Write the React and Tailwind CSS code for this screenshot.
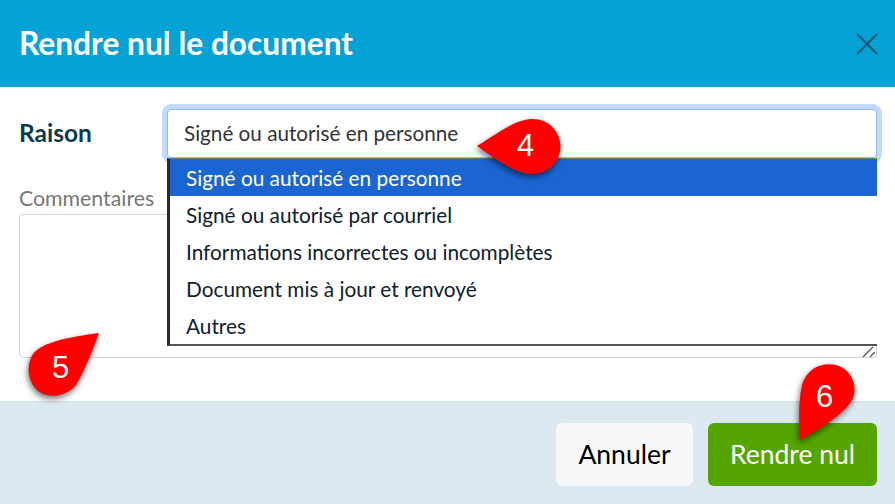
import React from "react";

const options = [
  "Signé ou autorisé en personne",
  "Signé ou autorisé par courriel",
  "Informations incorrectes ou incomplètes",
  "Document mis à jour et renvoyé",
  "Autres",
];

// numbered red callouts that sit over the dialog
function Callout({ d, label, textClass }) {
  return (
    <div className="absolute left-0 top-0 z-20">
      <svg width="895" height="504" viewBox="0 0 895 504" className="drop-shadow-[-1px_3px_3px_rgba(0,0,0,0.55)]">
        <path d={d} fill="#ff0000" />
      </svg>
      <span className={"absolute text-white text-[31px] leading-none font-['Liberation_Sans',sans-serif] " + textClass}>
        {label}
      </span>
    </div>
  );
}

export default function App() {
  return (
    <div className="relative w-[895px] h-[504px] overflow-hidden bg-white font-['Lato',sans-serif]">
      {/* Header */}
      <div className="h-[87px] bg-[#05a2d6] flex items-center justify-between pl-[19px] pr-[17px]">
        <h1 className="text-[31.7px] leading-none font-bold text-white">Rendre nul le document</h1>
        <svg width="22" height="22" viewBox="0 0 22 22" fill="none" stroke="#0c5a78" strokeWidth="2.2">
          <path d="M1 1L21 21M21 1L1 21" />
        </svg>
      </div>

      {/* Body */}
      <div className="h-[314px] pl-[19px] pr-[18px] pt-[22px]">
        <div className="flex items-center h-[49px]">
          <label className="w-[148px] text-[24.5px] font-bold text-[#0b3a4a]">Raison</label>
          <div className="relative flex-1">
            <div className="h-[49px] bg-white rounded-[4px] border border-[#8fb8f5] ring-[5px] ring-[#c3dafe] flex items-center pl-[16px] text-[20.7px] text-[#333333]">
              {options[0]}
            </div>
            <ul className="absolute z-10 top-[49px] left-0 w-full h-[188px] bg-white border-l-[3px] border-l-[#2b2b2b] border-t border-t-[#767676] border-b-2 border-b-[#555555] text-[20.8px] text-[#10202c]">
              {options.map((o, i) => (
                <li
                  key={o}
                  className={
                    "h-[37px] flex items-center pl-[16px] " + (i === 0 ? "bg-[#1a65d2] text-white" : "")
                  }
                >
                  {o}
                </li>
              ))}
            </ul>
          </div>
        </div>

        <div className="mt-[24px]">
          <div className="text-[21.3px] leading-[32px] text-[#777777]">Commentaires</div>
          <div className="relative">
            <textarea
              readOnly
              className="block w-full h-[144px] bg-white border border-[#cfd5dc] rounded-[4px] resize-none"
            />
            <svg width="14" height="11" viewBox="0 0 14 11" className="absolute right-[1px] bottom-[1px]" fill="none" stroke="#555555" strokeWidth="1.3">
              <path d="M1 11L11 1M8 11L13 6" />
            </svg>
          </div>
        </div>
      </div>

      {/* Footer */}
      <div className="h-[103px] bg-[#dde9f0] border-t border-t-[#d3dfe6] flex justify-end items-start gap-[15px] pr-[18px] pt-[21px]">
        <button className="w-[137px] h-[63px] rounded-[6px] bg-[#f6f8fa] text-[26.5px] text-black">Annuler</button>
        <button className="w-[169px] h-[63px] rounded-[6px] bg-[#55a500] text-[26.5px] text-white">Rendre nul</button>
      </div>

      <Callout
        label="4"
        textClass="left-[517px] top-[130px]"
        d="M477 146C497 134 515 119 533 119A27.500 27.500 0 0 1 533 174C515 174 497 160 477 146Z"
      />
      <Callout
        label="5"
        textClass="left-[52px] top-[352px]"
        d="M99 333C92 352 84 372 76 385C66 397 48 399 38 391C27 381 26 365 33 354C42 342 70 337 99 333Z"
      />
      <Callout
        label="6"
        textClass="left-[816px] top-[381px]"
        d="M800 440C799 420 798 405 802 385C807 368 822 362 836 365C851 369 858 385 853 398C847 412 822 428 800 440Z"
      />
    </div>
  );
}
